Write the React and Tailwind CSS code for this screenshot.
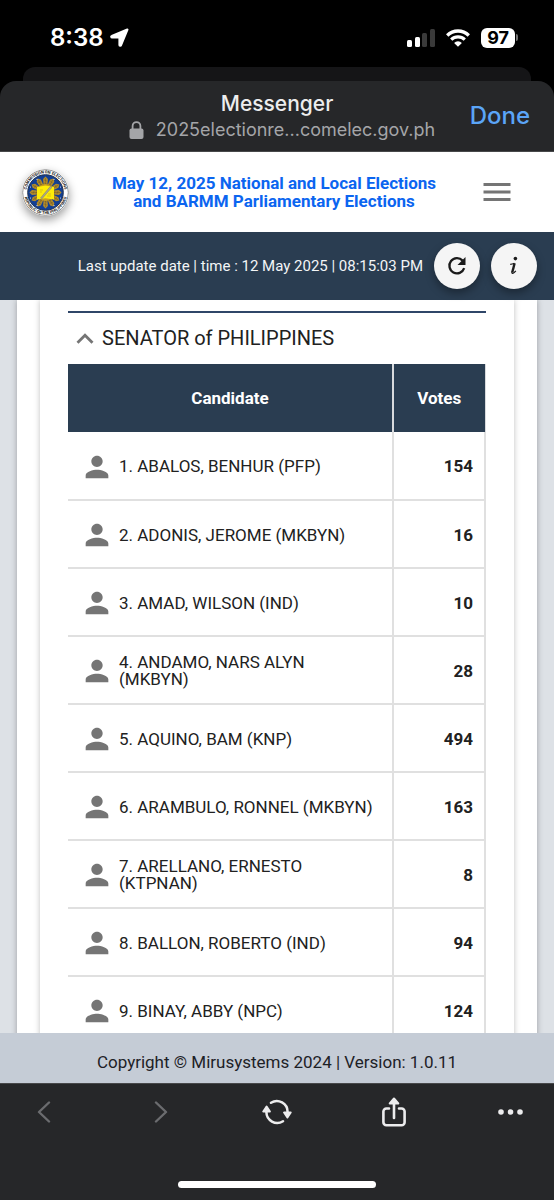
import { MdExpandLess, MdMenu, MdPerson } from "react-icons/md";

const candidates = [
    { name: "1. ABALOS, BENHUR (PFP)", votes: 154 },
    { name: "2. ADONIS, JEROME (MKBYN)", votes: 16 },
    { name: "3. AMAD, WILSON (IND)", votes: 10 },
    { name: "4. ANDAMO, NARS ALYN (MKBYN)", votes: 28 },
    { name: "5. AQUINO, BAM (KNP)", votes: 494 },
    { name: "6. ARAMBULO, RONNEL (MKBYN)", votes: 163 },
    { name: "7. ARELLANO, ERNESTO (KTPNAN)", votes: 8 },
    { name: "8. BALLON, ROBERTO (IND)", votes: 94 },
    { name: "9. BINAY, ABBY (NPC)", votes: 124 }
];

const rays = [0, 30, 60, 90, 120, 150, 180, 210, 240, 270, 300, 330];

function StatusBar() {
    return (
        <div className="flex shrink-0 items-center justify-between pt-5 pr-9 pb-3 pl-[50px] text-white">
            <div className="flex items-center gap-1.5">
                <span className="font-['Inter'] text-2xl leading-[35px] font-semibold">8:38</span>
                <svg width="19" height="19" viewBox="0 0 19 19">
                    <path d="M17.4 1.6 11 17.2c-.3.8-1.5.6-1.5-.3V9.5H2.1c-.9 0-1.1-1.2-.3-1.5Z" fill="white" stroke="white" strokeWidth="2.2" strokeLinejoin="round" />
                </svg>
            </div>

            <div className="flex items-center gap-[11px]">
                <svg width="28" height="18" viewBox="0 0 28 18">
                    <rect x="0" y="11" width="5" height="7" rx="1.5" fill="white" />
                    <rect x="8" y="8" width="5" height="10" rx="1.5" fill="white" />
                    <rect x="15" y="4" width="5" height="14" rx="1.5" fill="#3a3a3a" />
                    <rect x="23" y="0" width="5" height="18" rx="1.5" fill="#3a3a3a" />
                </svg>
                <svg width="24" height="18" viewBox="0 0 24 18" fill="none">
                    <path d="M1.2 6.4a15.6 15.6 0 0 1 21.6 0" stroke="white" strokeWidth="3.4" />
                    <path d="M5.2 10.6a9.8 9.8 0 0 1 13.6 0" stroke="white" strokeWidth="3.2" />
                    <path d="M12 17.8 8.1 13.9a5.6 5.6 0 0 1 7.8 0Z" fill="white" />
                </svg>
                <div className="flex items-center gap-px">
                    <span className="rounded-md bg-white px-1.5 font-['Inter'] text-lg leading-5 font-bold text-black">97</span>
                    <span className="h-[7px] w-0.5 rounded-r bg-neutral-500" />
                </div>
            </div>
        </div>
    );
}

function Seal() {
    return (
        <svg className="shrink-0 rounded-full shadow-[0_4px_10px_rgba(0,0,0,0.4)]" width="47" height="47" viewBox="0 0 47 47">
            <defs>
                <path id="seal-top" d="M4.4 23.5a19.1 19.1 0 0 1 38.2 0" />
                <path id="seal-bottom" d="M1.9 23.5a21.6 21.6 0 0 0 43.2 0" />
            </defs>
            <circle cx="23.5" cy="23.5" r="22.8" fill="white" stroke="#8b8b8b" strokeWidth="1" />
            <circle cx="23.5" cy="23.5" r="17.8" fill="#123f94" stroke="#26344f" strokeWidth="1" />
            {rays.map((angle) => (
                <g key={angle} transform={`rotate(${angle} 23.5 23.5)`}>
                    <path d="M23.5 7.4 25.9 10l-.7 9h-3.4l-.7-9Z" fill="#b28b2a" />
                    <path d="M23.5 9v8M22.2 11l2.6 1M22.2 14l2.6 1" stroke="#6f5a28" strokeWidth=".5" />
                </g>
            ))}
            <circle cx="23.5" cy="23.5" r="8.5" fill="#c79d1e" />
            <path d="m15 18 8.5-1.5L32 18v12.5l-8.5-1.2-8.5 1.2Z" fill="#fdec08" />
            <path d="m18.5 29 9.6-11.4 1.6-.4-.3 1.8L19.8 30Z" fill="#a9a68c" stroke="#77735b" strokeWidth=".4" />
            <path d="M18 21h3M18 23h2M26 25h3M25 27h4" stroke="#c5a91b" strokeWidth=".6" />
            <g fill="#e8edf8">
                <circle cx="15" cy="10.5" r=".6" />
                <circle cx="32" cy="10.5" r=".6" />
                <circle cx="8.5" cy="18" r=".6" />
                <circle cx="38.5" cy="18" r=".6" />
                <circle cx="8.5" cy="29" r=".6" />
                <circle cx="38.5" cy="29" r=".6" />
                <circle cx="15" cy="36.5" r=".6" />
                <circle cx="32" cy="36.5" r=".6" />
            </g>
            <g fill="#111111" fontFamily="Roboto, sans-serif" fontSize="4" fontWeight="700" textAnchor="middle">
                <text><textPath href="#seal-top" startOffset="50%">COMMISSION ON ELECTIONS</textPath></text>
                <text><textPath href="#seal-bottom" startOffset="50%">REPUBLIC OF THE PHILIPPINES</textPath></text>
            </g>
        </svg>
    );
}

function BrowserHeader() {
    return (
        <div className="shrink-0">
            <div className="mx-[23px] h-3.5 rounded-t-xl bg-[#151517]" />
            <div className="relative rounded-t-2xl border-b border-[#47484a] bg-[#262729] pt-2.5 pb-2 text-center font-['Inter']">
                <p className="text-[21px] leading-[26px] font-medium text-[#ededee]">Messenger</p>
                <p className="flex items-center justify-center gap-3 pl-2.5 text-lg leading-[26px] text-[#a4a5a8]">
                    <svg width="15" height="18" viewBox="0 0 15 18" fill="none">
                        <path d="M3.6 8V5a3.9 3.9 0 0 1 7.8 0v3" stroke="#a4a5a8" strokeWidth="1.8" />
                        <rect x=".5" y="7.4" width="14" height="10.6" rx="2" fill="#a4a5a8" />
                    </svg>
                    2025electionre...comelec.gov.ph
                </p>
                <button className="absolute inset-y-0 right-6 text-2xl font-medium text-[#5ba5f7]">Done</button>
            </div>
        </div>
    );
}

function SiteHeader() {
    return (
        <header className="relative z-10 shrink-0">
            <div className="flex h-20 items-center justify-between bg-white pr-[39px] pl-[22px]">
                <Seal />
                <h1 className="text-center text-[17px] leading-[18px] font-bold text-[#0b65f0]">
                    <span className="block">May 12, 2025 National and Local Elections</span>
                    <span className="block">and BARMM Parliamentary Elections</span>
                </h1>
                <button aria-label="Menu" className="text-[#757575]">
                    <MdMenu size={36} />
                </button>
            </div>

            <div className="flex items-center justify-end gap-[11px] bg-[#2a3d51] py-[11px] pr-[17px] text-[#f3f5f7]">
                <p className="text-[15px]">Last update date | time : 12 May 2025 | 08:15:03 PM</p>
                <button aria-label="Refresh" className="flex size-[46px] items-center justify-center rounded-full bg-[#f5f5f5] shadow-[0_4px_8px_rgba(0,0,0,0.35)]">
                    <svg width="20" height="20" viewBox="0 0 20 20" fill="none">
                        <path d="M17.2 12.2A7.6 7.6 0 1 1 15.6 4.6" stroke="#1b1b1b" strokeWidth="2.3" />
                        <path d="M18.5 1v8h-8Z" fill="#1b1b1b" />
                    </svg>
                </button>
                <button aria-label="Information" className="flex size-[46px] items-center justify-center rounded-full bg-[#f5f5f5] shadow-[0_4px_8px_rgba(0,0,0,0.35)]">
                    <svg width="10" height="20" viewBox="0 0 10 20" fill="none">
                        <circle cx="6.4" cy="2.6" r="1.8" fill="#1b1b1b" />
                        <path d="M1.2 8.4c1.6 0 3-.5 4.2-1.1" stroke="#1b1b1b" strokeWidth="1.2" />
                        <path d="m5.6 7.2-2.3 9" stroke="#1b1b1b" strokeWidth="2.4" />
                        <path d="M3 15.6c-.7 2.6 1.6 2.2 3.8-.7" stroke="#1b1b1b" strokeWidth="1.3" />
                    </svg>
                </button>
            </div>
        </header>
    );
}

function Results() {
    return (
        <main className="min-h-0 flex-1 overflow-hidden bg-[#dde1e6] px-[17px]">
            <div className="bg-white px-[23px] shadow-[0_0_6px_rgba(0,0,0,0.3)]">
                <div className="bg-white px-7 pt-[11px] shadow-[0_0_6px_rgba(0,0,0,0.25)]">
                    <h2 className="border-t-2 border-[#2f4668] text-xl leading-[51px] text-[#212121]">
                        <button className="flex w-full items-center">
                            <MdExpandLess size={34} className="text-[#757575]" />
                            SENATOR of PHILIPPINES
                        </button>
                    </h2>

                    <table className="w-full border-collapse text-[17px] leading-[17px] text-[#212121]">
                        <thead>
                            <tr className="h-[68px] bg-[#2a3d51] text-white">
                                <th className="border-r-2 border-[#d8dadd] font-bold">Candidate</th>
                                <th className="w-[92px] border-r border-[#d8dadd] font-bold">Votes</th>
                            </tr>
                        </thead>
                        <tbody>
                            {candidates.map((candidate) => (
                                <tr key={candidate.name} className="h-[68px] border-b-2 border-[#e0e0e0]">
                                    <td className="border-r-2 border-[#e0e0e0] pt-0.5 pr-4 pl-3">
                                        <div className="flex items-center gap-[5px]">
                                            <MdPerson size={34} className="shrink-0 text-[#757575]" />
                                            <span>{candidate.name}</span>
                                        </div>
                                    </td>
                                    <td className="border-r-2 border-[#e0e0e0] pt-0.5 pr-[11px] text-right font-bold">{candidate.votes}</td>
                                </tr>
                            ))}
                        </tbody>
                    </table>
                </div>
            </div>
        </main>
    );
}

function Toolbar() {
    return (
        <nav className="shrink-0 border-t border-[#47484a] bg-[#262729] px-7 pb-3">
            <div className="flex h-14 items-center justify-between">
                <button aria-label="Back" className="flex w-8 justify-center">
                    <svg width="14" height="22" viewBox="0 0 14 22" fill="none" stroke="#6b6c6f" strokeWidth="2.4" strokeLinecap="round" strokeLinejoin="round">
                        <path d="M12 1.5 2 11l10 9.5" />
                    </svg>
                </button>
                <button aria-label="Forward" className="flex w-8 justify-center">
                    <svg width="14" height="22" viewBox="0 0 14 22" fill="none" stroke="#6b6c6f" strokeWidth="2.4" strokeLinecap="round" strokeLinejoin="round">
                        <path d="m2 1.5 10 9.5L2 20.5" />
                    </svg>
                </button>
                <button aria-label="Reload" className="flex w-8 justify-center">
                    <svg width="30" height="26" viewBox="0 0 30 26" fill="none" stroke="#ececed" strokeWidth="2.5" strokeLinecap="round">
                        <path d="M9 3.8A10.8 10.8 0 0 1 25.6 13" />
                        <path d="M21 22.2A10.8 10.8 0 0 1 4.4 13" />
                        <path d="M22.1 13.5h6.6l-3.3 5ZM1.3 12.5h6.6l-3.3-5Z" fill="#ececed" strokeWidth="2" strokeLinejoin="round" />
                    </svg>
                </button>
                <button aria-label="Share" className="flex w-8 justify-center">
                    <svg width="24" height="30" viewBox="0 0 24 30" fill="none" stroke="#ececed" strokeWidth="2.6" strokeLinecap="round">
                        <path d="M7 11.5H4.4a3 3 0 0 0-3 3v10.7a3 3 0 0 0 3 3h15.2a3 3 0 0 0 3-3V14.5a3 3 0 0 0-3-3H17" />
                        <path d="M12 6v15" />
                        <path d="m12 1.5 4.3 5H7.7Z" fill="#ececed" strokeWidth="2" strokeLinejoin="round" />
                    </svg>
                </button>
                <button aria-label="More" className="flex w-8 justify-center">
                    <svg width="25" height="6" viewBox="0 0 25 6" fill="#ececed">
                        <circle cx="3" cy="3" r="2.8" />
                        <circle cx="12.5" cy="3" r="2.8" />
                        <circle cx="22" cy="3" r="2.8" />
                    </svg>
                </button>
            </div>
            <div className="mx-auto mt-[41px] h-[7px] w-[198px] rounded-full bg-white" />
        </nav>
    );
}

export default function App() {
    return (
        <div className="flex h-screen flex-col overflow-hidden bg-black font-['Roboto',sans-serif]">
            <StatusBar />
            <BrowserHeader />
            <SiteHeader />
            <Results />
            <footer className="relative z-10 shrink-0 bg-[#c5ccd6] pt-2 text-center text-[17px] leading-[42px] text-[#1d2126]">
                Copyright © Mirusystems 2024 | Version: 1.0.11
            </footer>
            <Toolbar />
        </div>
    );
}
